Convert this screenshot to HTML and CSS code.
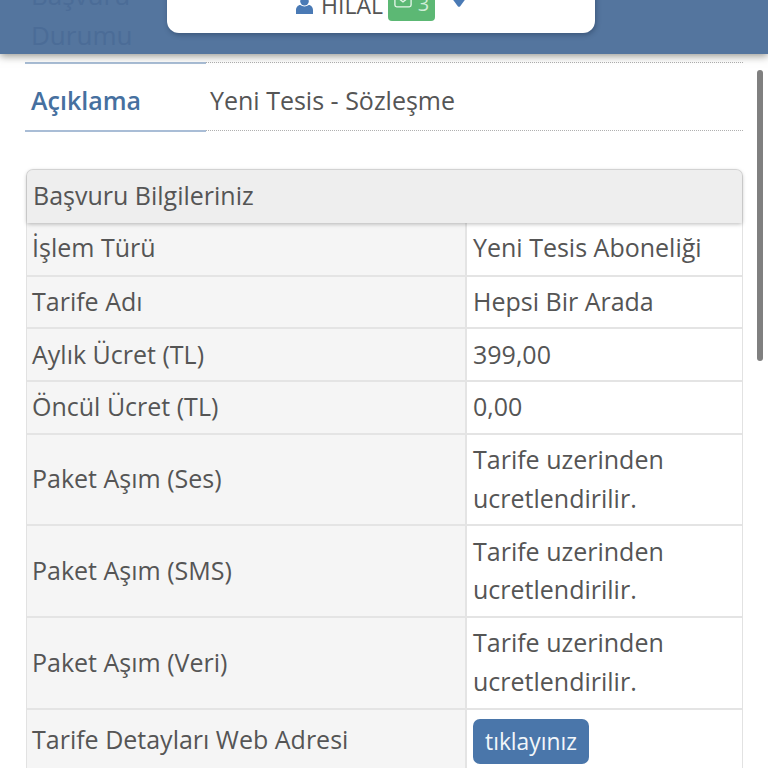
FILE: index.html
```html
<!DOCTYPE html>
<html lang="tr">
<head>
<meta charset="utf-8">
<title>Başvuru Durumu</title>
<link rel="stylesheet" href="styles.css">
</head>
<body>
<header class="topbar">
  <div class="topbar-title">Başvuru<br>Durumu</div>
  <div class="user-card">
    <svg class="icon-user" viewBox="0 0 20 20"><circle cx="10" cy="5" r="5"/><path d="M0 20v-4.500C0 12 2.500 9.500 5 9.500c1.500 1 3 1.700 5 1.700s3.500-.7 5-1.700c2.500 0 5 2.500 5 6V20z"/></svg>
    <span class="user-name">HİLAL</span>
    <span class="mail-badge">
      <svg class="icon-mail" viewBox="0 0 20 16"><rect x="1" y="1" width="18" height="14" rx="2"/><path d="M1.500 3l8.500 6.500L18.500 3"/></svg>
      <span>3</span>
    </span>
    <svg class="icon-caret" viewBox="0 0 16 10"><path d="M0 0h16L9 9.500Q8 10 7 9.500z"/></svg>
  </div>
</header>
<main class="content">
  <div class="info-row info-row-first"></div>
  <div class="info-row">
    <div class="info-label">Açıklama</div>
    <div class="info-value">Yeni Tesis - Sözleşme</div>
  </div>
  <section class="panel">
    <h2 class="panel-title">Başvuru Bilgileriniz</h2>
    <table class="details">
      <tbody>
        <tr><th>İşlem Türü</th><td>Yeni Tesis Aboneliği</td></tr>
        <tr><th>Tarife Adı</th><td>Hepsi Bir Arada</td></tr>
        <tr><th>Aylık Ücret (TL)</th><td>399,00</td></tr>
        <tr><th>Öncül Ücret (TL)</th><td>0,00</td></tr>
        <tr><th>Paket Aşım (Ses)</th><td>Tarife uzerinden ucretlendirilir.</td></tr>
        <tr><th>Paket Aşım (SMS)</th><td>Tarife uzerinden ucretlendirilir.</td></tr>
        <tr><th>Paket Aşım (Veri)</th><td>Tarife uzerinden ucretlendirilir.</td></tr>
        <tr><th>Tarife Detayları Web Adresi</th><td><a class="btn" href="#">tıklayınız</a></td></tr>
      </tbody>
    </table>
  </section>
</main>
<div class="scrollbar"></div>
</body>
</html>
```
FILE: styles.css
```css
* { box-sizing: border-box; }
html, body { margin: 0; height: 768px; overflow: hidden; background: #fff; }
body {
  font-family: "Open Sans", "Noto Sans", sans-serif;
  font-size: 25px;
  line-height: 38.9px;
  color: #555;
  position: relative;
}
.topbar {
  position: relative;
  z-index: 2;
  height: 54px;
  background: #54759e;
  box-shadow: 0 2px 8px rgba(60, 60, 50, .55);
  display: flex;
  align-items: flex-end;
  overflow: hidden;
  padding-left: 31px;
}
.topbar-title {
  width: 136px;
  flex: none;
  color: #4b6c97;
  line-height: 40px;
  font-size: 26px;
  margin-bottom: -1px;
}
.user-card {
  width: 428px;
  height: 60px;
  margin-bottom: 21px;
  background: #fff;
  border-radius: 0 0 12px 12px;
  box-shadow: 1px 2px 5px rgba(30, 50, 80, .45);
  display: flex;
  align-items: flex-end;
  padding: 0 0 12px 129px;
  flex: none;
  font-size: 23px;
  line-height: 30px;
}
.icon-user { width: 17px; height: 17px; fill: #4a7ab5; margin-bottom: 7px; flex: none; }
.user-name { margin-left: 8px; margin-bottom: 1px; color: #555; }
.mail-badge {
  margin-left: 5px;
  width: 47px;
  height: 40px;
  background: #5cb874;
  border-radius: 0 0 4px 4px;
  color: #cfeed8;
  font-size: 20px;
  display: flex;
  align-items: flex-end;
  justify-content: center;
  gap: 6px;
  padding-bottom: 5px;
  line-height: 24px;
}
.icon-mail { width: 18px; height: 15px; fill: none; stroke: #e4f5e8; stroke-width: 1.500; margin-bottom: 8px; }
.icon-caret { width: 16px; height: 10px; fill: #4a7ab5; margin: 0 0 14px 16px; flex: none; }
.content { padding: 0 25px 0 26px; }
.info-row {
  display: flex;
  height: 68px;
  align-items: center;
  border-bottom: 1.500px dotted #b0b0b0;
  position: relative;
  padding: 7px 0 0 6px;
  margin-left: -1px;
}
.info-row-first { height: 9px; padding: 0; }
.info-row::after {
  content: "";
  position: absolute;
  left: 0;
  bottom: -1.500px;
  width: 181px;
  height: 2px;
  background: #a9bdd6;
}
.info-label { width: 179px; font-weight: 600; color: #46709f; }
.info-value { color: #555; }
.panel {
  margin-top: 38px;
  border: 1px solid #e2e2e2;
  border-radius: 7px 7px 0 0;
  border-bottom: 0;
}
.panel-title {
  margin: 0;
  height: 53px;
  padding: 6px 6px;
  font: inherit;
  background: #eee;
  border-radius: 6px 6px 0 0;
  box-shadow: 0 1px 4px rgba(0, 0, 0, .28);
  position: relative;
}
.details { width: 100%; border-collapse: collapse; table-layout: fixed; }
.details th, .details td {
  padding: 5.2px 6px 6.6px;
  border: 2px solid #e4e4e4;
  font-weight: 400;
  text-align: left;
  vertical-align: middle;
}
.details tr:first-child th, .details tr:first-child td { border-top: 0; padding-bottom: 7.6px; }
.details th { width: 439px; background: #f5f5f5; border-left: 0; padding-left: 5px; }
.details td { background: #fff; border-right: 0; }
.btn {
  display: block;
  width: fit-content;
  margin-top: 4px;
  background: #4a76aa;
  color: #f2f6fa;
  text-decoration: none;
  font-size: 22.8px;
  line-height: 31px;
  padding: 7px 12px;
  border-radius: 7px;
}
.scrollbar {
  position: absolute;
  left: 757px;
  top: 70px;
  width: 6px;
  height: 291px;
  border-radius: 3px;
  background: #808080;
}
```
